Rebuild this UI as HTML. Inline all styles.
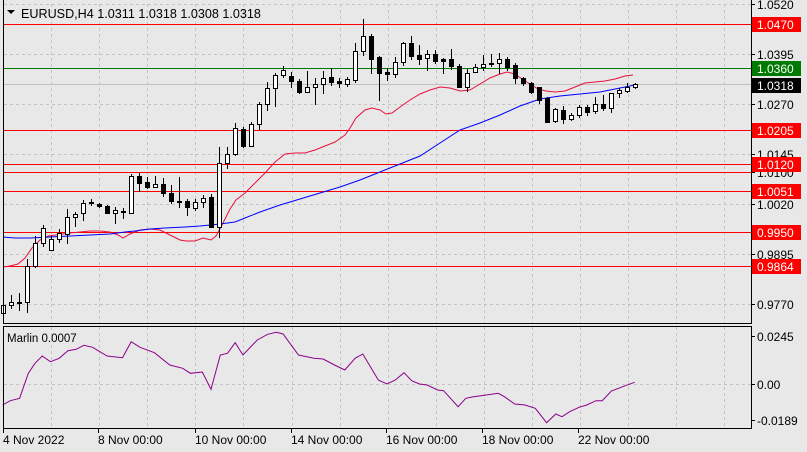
<!DOCTYPE html>
<html><head><meta charset="utf-8"><style>
html,body{margin:0;padding:0;background:#e8e8e8;}
svg{display:block;font-family:"Liberation Sans",Tahoma,sans-serif;}
</style></head><body>
<svg id="s" width="807" height="452" xmlns="http://www.w3.org/2000/svg">
<rect width="807" height="452" fill="#e8e8e8"/>
<g id="grid" stroke="#c4c4c4" stroke-dasharray="3,3" shape-rendering="crispEdges"></g>
<g id="hl" shape-rendering="crispEdges"></g>
<polyline id="red" fill="none" stroke="#e8103c" stroke-width="1"/>
<polyline id="blue" fill="none" stroke="#0000ff" stroke-width="1"/>
<g id="cd" shape-rendering="crispEdges"></g>
<polyline id="mar" fill="none" stroke="#8b008b" stroke-width="1"/>
<g shape-rendering="crispEdges" stroke="#000">
<line x1="3.5" y1="0" x2="3.5" y2="324"/>
<line x1="751.5" y1="0" x2="751.5" y2="324"/>
<line x1="3" y1="323.5" x2="752" y2="323.5"/>
<line x1="3" y1="326.5" x2="752" y2="326.5"/>
<line x1="3.5" y1="326" x2="3.5" y2="429"/>
<line x1="751.5" y1="326" x2="751.5" y2="429"/>
<line x1="3" y1="428.5" x2="752" y2="428.5"/>
</g>
<g id="lab" font-size="12"></g>
<polygon points="7,10 15,10 11,14" fill="#000"/>
<text x="21" y="18" font-size="12.6" fill="#000">EURUSD,H4  1.0311 1.0318 1.0308 1.0318</text>
<text x="7" y="342" font-size="11.5" fill="#000">Marlin 0.0007</text>
</svg>
<script>
const NS="http://www.w3.org/2000/svg";
function el(p,t,a,txt){const e=document.createElementNS(NS,t);for(const k in a)e.setAttribute(k,a[k]);if(txt!==undefined)e.textContent=txt;p.appendChild(e);return e;}
const g=document.getElementById('grid');
for(let k=0;k<15;k++){const x=Math.round(51+48.1*k)+.5;el(g,'line',{x1:x,y1:4,x2:x,y2:323});el(g,'line',{x1:x,y1:327,x2:x,y2:428});}
[4,54,104,154,204,254,304].forEach(y=>el(g,'line',{x1:4,y1:y+.5,x2:751,y2:y+.5}));
el(g,'line',{x1:4,y1:384.5,x2:751,y2:384.5});
const hl=document.getElementById('hl');
el(hl,'line',{x1:4,y1:84.5,x2:751,y2:84.5,stroke:'#c0c0c0'});
[24,130,164,172,191,232,266].forEach(y=>el(hl,'line',{x1:4,y1:y+.5,x2:751,y2:y+.5,stroke:'#ff0000'}));
el(hl,'line',{x1:4,y1:68.5,x2:751,y2:68.5,stroke:'#007a00'});
const lab=document.getElementById('lab');
[[4,'1.0520'],[54,'1.0395'],[104,'1.0270'],[154,'1.0145'],[172,'1.0100'],[204,'1.0020'],[254,'0.9895'],[304,'0.9770'],[336,'0.0245'],[384,'0.00'],[420,'-0.0189']].forEach(([y,t])=>{
 el(lab,'line',{x1:751,y1:y+.5,x2:755,y2:y+.5,stroke:'#000'});el(lab,'text',{x:757,y:y+5,fill:'#000'},t);});
[[24,'1.0470','#ff0000','#fff'],[68,'1.0360','#007a00','#fff'],[85,'1.0318','#000','#fff'],[130,'1.0205','#ff0000','#fff'],[164,'1.0120','#ff0000','#fff'],[191,'1.0051','#ff0000','#fff'],[232,'0.9950','#ff0000','#fff'],[266,'0.9864','#ff0000','#fff']].forEach(([y,t,bg,fg])=>{
 el(lab,'rect',{x:752,y:y-7,width:49,height:15,fill:bg});el(lab,'text',{x:757,y:y+5,fill:fg},t);});
[[3,'4 Nov 2022'],[98,'8 Nov 00:00'],[195,'10 Nov 00:00'],[291,'14 Nov 00:00'],[386,'16 Nov 00:00'],[482,'18 Nov 00:00'],[578,'22 Nov 00:00']].forEach(([x,t],i)=>{
 el(lab,'line',{x1:x+.5,y1:429,x2:x+.5,y2:433,stroke:'#000'});el(lab,'text',{x:x,y:444,fill:'#000'},t);});
const C=[[305,313,303,316,1],[302,305,295,308,1],[302,302,293,310,1],[266,302,259,312,1],[243,266,236,267,1],[228,243,225,246,1],[239,250,236,250,1],[233,239,229,242,1],[217,234,209,243,1],[214,217,212,226,1],[203,213,200,220,1],[202,203,199,205,1],[204,206,203,207,0],[206,213,205,213,0],[210,213,207,223,1],[211,212,208,218,1],[176,213,174,213,1],[176,183,173,191,0],[182,187,177,188,0],[184,187,176,187,1],[184,193,178,196,0],[193,201,185,203,0],[201,202,177,207,1],[201,207,199,215,0],[202,208,199,210,1],[198,202,195,207,1],[197,227,194,227,0],[163,227,147,237,1],[154,163,147,168,1],[128,154,123,155,1],[129,146,127,147,0],[124,146,122,146,1],[104,124,102,129,1],[88,104,82,110,1],[75,88,73,106,1],[70,75,66,77,1],[76,81,72,87,0],[81,92,79,93,0],[87,92,71,92,1],[84,87,78,104,1],[78,84,71,93,1],[77,82,68,85,0],[81,83,78,87,0],[79,84,77,86,1],[51,80,43,82,1],[36,51,19,55,1],[36,59,34,73,0],[57,73,56,100,0],[72,74,68,80,0],[62,74,57,77,1],[43,62,42,65,1],[43,56,36,59,0],[55,59,45,64,0],[54,58,50,70,1],[54,61,50,63,0],[59,61,58,73,0],[59,66,49,69,0],[66,87,64,87,0],[73,87,69,91,1],[67,72,64,72,1],[64,67,55,70,1],[63,64,54,66,0],[59,63,53,73,1],[59,67,57,70,0],[65,78,63,83,0],[78,83,77,85,0],[83,92,82,93,0],[87,100,87,103,0],[98,122,97,122,0],[109,121,108,122,1],[110,119,106,123,0],[115,119,113,120,1],[107,115,105,117,1],[107,112,105,115,0],[104,111,97,113,1],[104,108,95,110,0],[93,108,93,112,1],[90,93,88,97,1],[87,91,83,92,1],[84,87,83,88,1]];
const cd=document.getElementById('cd');
C.forEach((c,i)=>{const x=3+8*i;const[t,b,h,l,w]=c;
 el(cd,'line',{x1:x+.5,y1:h,x2:x+.5,y2:l+1,stroke:'#000'});
 el(cd,'rect',{x:x-1.5,y:t+.5,width:4,height:Math.max(1,b-t),fill:w?'#fff':'#000',stroke:'#000'});});
document.getElementById('red').setAttribute('points',"3,267 10,266 18,264 25,258 32,248 40,240 48,236 56,235 70,233 80,232 90,231 100,231 110,232 118,235 123,238 130,234 140,230 150,229 160,230 170,235 180,240 186,241 195,241 203,238 211,240 216,236 222,225 230,209 236,200 245,193 255,183 265,173 275,162 285,154 295,153 305,153 315,150 325,146 335,142 345,135 350,128 356,118 365,110 372,108 380,110 386,114 392,113 400,107 410,100 420,94 430,90 440,87 450,88 460,91 470,90 480,84 490,78 500,74 507,72 515,74 522,79 530,84 538,89 546,91 555,92 565,91 575,87 585,83 595,82 605,81 615,79 625,76 633,75");
document.getElementById('blue').setAttribute('points',"3,237 15,238 30,238 50,237 70,236 90,235 110,234 125,232 135,231 150,229 165,228 185,227 200,226 210,225 220,224 235,222 245,218 260,212 280,205 300,199 320,193 340,187 360,180 380,172 400,164 420,156 440,143 460,130 480,123 500,115 520,106 540,99 560,96 580,94 600,92 620,88 635,85");
const M=[[5,525],[20,512],[38,505],[55,430],[68,400],[82,378],[98,395],[115,385],[132,362],[148,358],[163,346],[180,352],[208,378],[238,383],[255,335],[272,352],[300,368],[330,405],[355,415],[370,430],[393,426],[410,478],[428,375],[442,370],[457,338],[472,375],[500,330],[520,313],[537,307],[550,312],[580,375],[610,385],[628,387],[650,405],[670,420],[690,385],[705,372],[735,450],[752,462],[768,450],[785,428],[800,452],[815,462],[830,465],[850,480],[862,482],[890,530],[905,505],[920,500],[945,495],[968,490],[980,500],[1000,522],[1020,525],[1040,535],[1062,578],[1080,552],[1092,560],[1107,545],[1125,532],[1140,525],[1158,512],[1170,512],[1188,483],[1210,470],[1233,457]];
document.getElementById('mar').setAttribute('points',M.map(p=>(p[0]/1.943).toFixed(1)+','+(230+p[1]/3).toFixed(1)).join(' '));
</script>
</body></html>
